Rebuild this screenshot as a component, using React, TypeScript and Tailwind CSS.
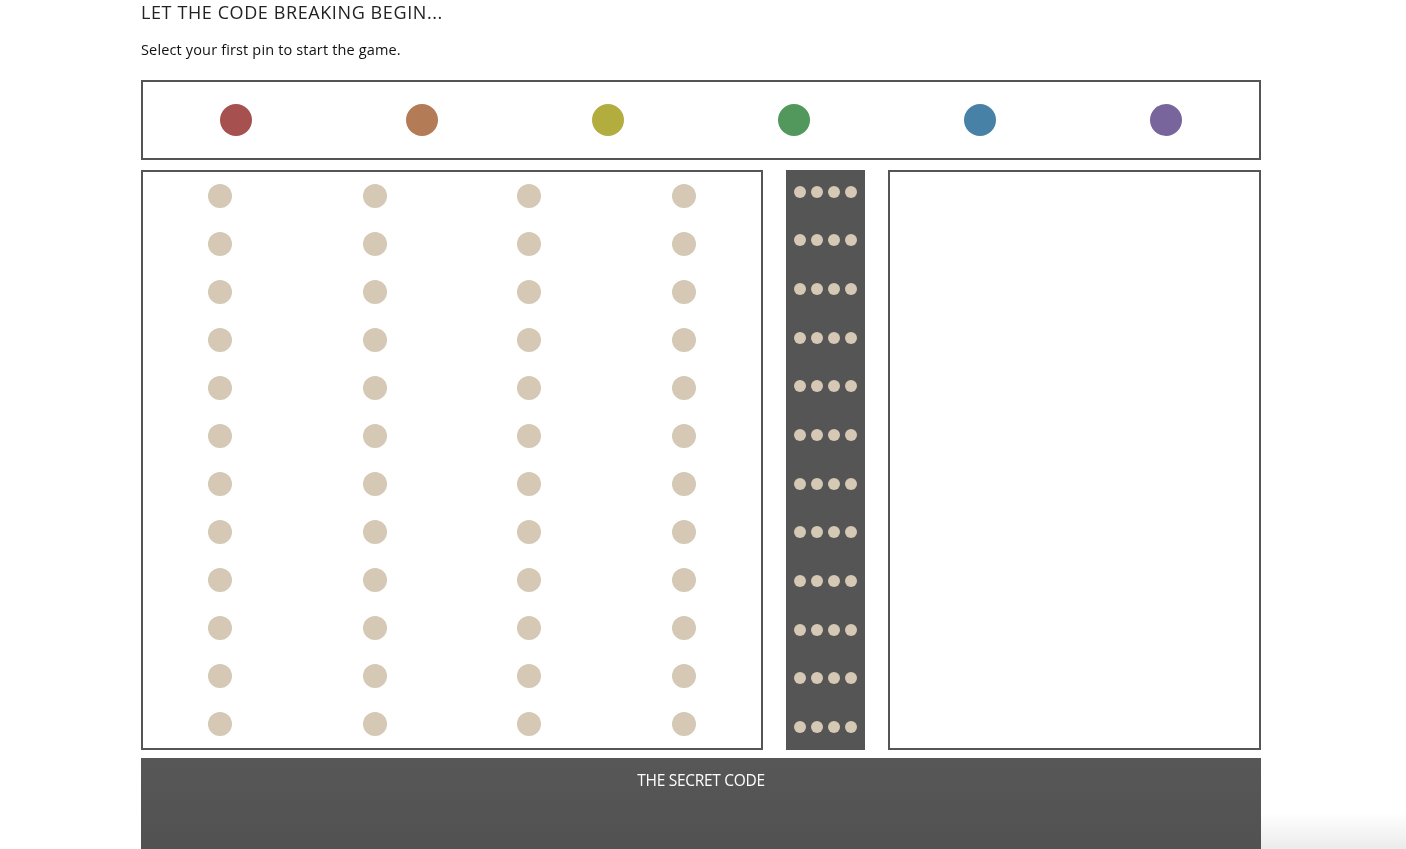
const colors = ['#a65150', '#b37c57', '#b3ac3f', '#52985d', '#4782a6', '#78659b']
const rows = Array.from({ length: 12 }, (_, i) => i)
const cols = [0, 1, 2, 3]

export default function App() {
  return (
    <div className="relative min-h-screen bg-white font-['Open_Sans',sans-serif] text-[#222]">
      {/* faint shade at the bottom right edge */}
      <div className="pointer-events-none fixed bottom-0 right-0 h-[36px] w-[150px] bg-gradient-to-b from-white to-[#ebebeb]" />
      <div className="relative mx-auto w-[1120px] -translate-x-[2px]">
        {/* Header */}
        <h1 className="pt-[1px] text-[18px] leading-[22px] font-normal tracking-[0.6px] text-[#222]">
          LET THE CODE BREAKING BEGIN...
        </h1>
        <p className="mt-[17px] text-[14.5px] leading-[20px] tracking-[0.15px] text-[#111]">
          Select your first pin to start the game.
        </p>

        {/* Palette */}
        <div className="mt-[20px] grid h-[80px] grid-cols-6 items-center border-2 border-[#555]">
          {colors.map((c) => (
            <div key={c} className="flex justify-center">
              <div className="h-[32px] w-[32px] rounded-full" style={{ backgroundColor: c }} />
            </div>
          ))}
        </div>

        {/* Board */}
        <div className="mt-[10px] flex h-[580px] gap-[23px]">
          <div className="w-[622px] border-2 border-[#555]">
            {rows.map((r) => (
              <div key={r} className="grid h-[48px] grid-cols-4 items-center">
                {cols.map((c) => (
                  <div key={c} className="flex justify-center">
                    <div className="h-[24px] w-[24px] rounded-full bg-[#d5c8b4]" />
                  </div>
                ))}
              </div>
            ))}
          </div>

          <div className="flex w-[79px] flex-col gap-[36.7px] bg-[#555] pt-[15.5px]">
            {rows.map((r) => (
              <div key={r} className="flex items-center justify-center gap-[5px]">
                {cols.map((c) => (
                  <div key={c} className="h-[12px] w-[12px] rounded-full bg-[#d5c8b4]" />
                ))}
              </div>
            ))}
          </div>

          <div className="flex-1 border-2 border-[#555]" />
        </div>

        {/* Secret code */}
        <div className="mt-[8px] h-[120px] bg-gradient-to-b from-[#575757] to-[#505050] pt-[10px] text-center">
          <span className="text-[15.5px] font-medium tracking-[-0.3px] text-white">THE SECRET CODE</span>
        </div>
      </div>
    </div>
  )
}
